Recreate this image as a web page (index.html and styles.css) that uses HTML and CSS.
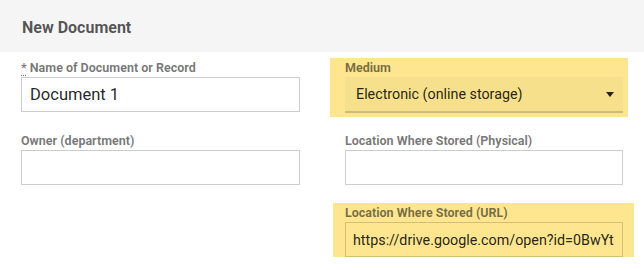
FILE: index.html
```html
<!DOCTYPE html>
<html lang="en">
<head>
    <meta charset="UTF-8">
    <title>New Document</title>
    <link rel="stylesheet" href="styles.css">
</head>
<body>
<header class="dialog__header">
    <h2>New Document</h2>
</header>
<form class="doc-form">
    <div class="field">
        <label for="name"><abbr title="required">*</abbr> Name of Document or Record</label>
        <input type="text" id="name" class="input--big" value="Document 1">
    </div>
    <div class="field field--mark field--medium">
        <label for="medium">Medium</label>
        <div class="select-wrap">
            <select id="medium">
                <option>Electronic (online storage)</option>
                <option>Paper</option>
            </select>
            <svg class="select-wrap__arrow" width="8" height="5" viewBox="0 0 8 5">
                <path d="M0 0h8L4 5z" fill="#222"/>
            </svg>
        </div>
    </div>
    <div class="field">
        <label for="owner">Owner (department)</label>
        <input type="text" id="owner">
    </div>
    <div class="field">
        <label for="physical">Location Where Stored (Physical)</label>
        <input type="text" id="physical">
    </div>
    <div class="field field--empty"></div>
    <div class="field field--mark field--url">
        <label for="url">Location Where Stored (URL)</label>
        <input type="text" id="url" value="https://drive.google.com/open?id=0BwYtq3kP9sRzT1VhbGxvUmFnZ0k">
    </div>
</form>
</body>
</html>
```

FILE: styles.css
```css
:root {
    --mark: #fde68f;
    --text: rgba(0, 0, 0, 0.87);
    --label: rgba(0, 0, 0, 0.54);
    --line: rgba(0, 0, 0, 0.2);
}

* {
    margin: 0;
    padding: 0;
    box-sizing: border-box;
}

body {
    background: #fff;
    font-family: Roboto, "Liberation Sans", sans-serif;
    color: var(--text);
}

.dialog__header {
    display: flex;
    align-items: center;
    height: 52px;
    padding: 2px 0 0 22px;
    background: #f5f5f5;
}

.dialog__header h2 {
    font-size: 16px;
    font-weight: 700;
    color: rgba(0, 0, 0, 0.66);
}

.doc-form {
    display: grid;
    grid-template-columns: 279px 278px;
    column-gap: 45px;
    row-gap: 21px;
    align-items: start;
    padding: 9px 0 0 21px;
}

.field {
    display: flex;
    flex-direction: column;
}

.field label {
    font-size: 12.5px;
    line-height: 14px;
    font-weight: 700;
    color: var(--label);
    margin-bottom: 2px;
}

.field abbr {
    text-decoration: underline dotted;
    text-underline-offset: 3px;
}

.field input {
    height: 35px;
    padding: 0 8px;
    font: 14.3px Roboto, "Liberation Sans", sans-serif;
    color: var(--text);
    background: transparent;
    border: 1px solid var(--line);
    border-radius: 0;
    outline: none;
}

.field .input--big {
    font-size: 16.5px;
}

/* yellow highlight round a field */
.field--mark {
    background: var(--mark);
}

.field--medium {
    margin: -3px -5px -4px -15px;
    padding: 3px 5px 4px 15px;
}

.field--url {
    margin: -3px -11px -7px -12px;
    padding: 3px 11px 7px 12px;
}

.field--url input {
    padding-left: 7px;
    border-color: rgba(0, 0, 0, 0.17);
}

.select-wrap {
    position: relative;
}

.select-wrap select {
    display: block;
    width: 100%;
    height: 36px;
    padding: 0 24px 1px 11px;
    font: 14.3px Roboto, "Liberation Sans", sans-serif;
    color: var(--text);
    background: rgba(0, 0, 0, 0.025);
    border: 0;
    border-bottom: 2px solid rgba(0, 0, 0, 0.16);
    border-radius: 0;
    appearance: none;
    outline: none;
}

.select-wrap__arrow {
    position: absolute;
    right: 9px;
    top: 15px;
    pointer-events: none;
}
```
